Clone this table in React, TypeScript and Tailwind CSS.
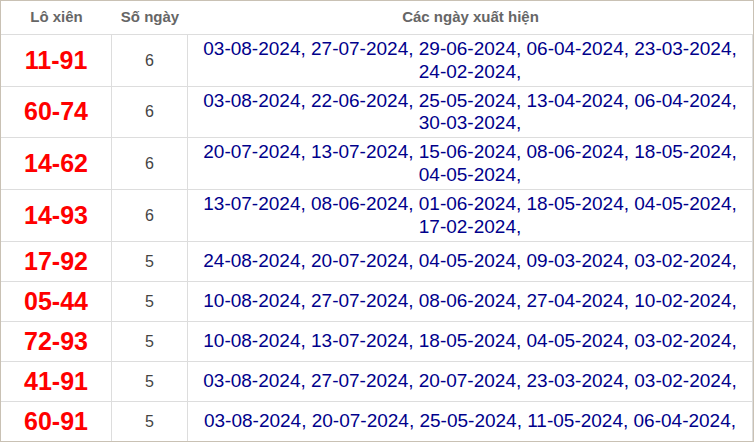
import React from 'react';

interface Row {
  pair: string;
  count: number;
  dates: string[];
  h: string;
}

const ROWS: Row[] = [
  { pair: '11-91', count: 6, h: 'h-[52px]', dates: ['03-08-2024', '27-07-2024', '29-06-2024', '06-04-2024', '23-03-2024', '24-02-2024'] },
  { pair: '60-74', count: 6, h: 'h-[51px]', dates: ['03-08-2024', '22-06-2024', '25-05-2024', '13-04-2024', '06-04-2024', '30-03-2024'] },
  { pair: '14-62', count: 6, h: 'h-[52px]', dates: ['20-07-2024', '13-07-2024', '15-06-2024', '08-06-2024', '18-05-2024', '04-05-2024'] },
  { pair: '14-93', count: 6, h: 'h-[52px]', dates: ['13-07-2024', '08-06-2024', '01-06-2024', '18-05-2024', '04-05-2024', '17-02-2024'] },
  { pair: '17-92', count: 5, h: 'h-[40px]', dates: ['24-08-2024', '20-07-2024', '04-05-2024', '09-03-2024', '03-02-2024'] },
  { pair: '05-44', count: 5, h: 'h-[40px]', dates: ['10-08-2024', '27-07-2024', '08-06-2024', '27-04-2024', '10-02-2024'] },
  { pair: '72-93', count: 5, h: 'h-[40px]', dates: ['10-08-2024', '13-07-2024', '18-05-2024', '04-05-2024', '03-02-2024'] },
  { pair: '41-91', count: 5, h: 'h-[40px]', dates: ['03-08-2024', '27-07-2024', '20-07-2024', '23-03-2024', '03-02-2024'] },
  { pair: '60-91', count: 5, h: 'h-[39px]', dates: ['03-08-2024', '20-07-2024', '25-05-2024', '11-05-2024', '06-04-2024'] },
];

export default function App() {
  return (
    <div className="w-[754px] h-[442px] bg-white border border-[#c9c1b4] font-['Liberation_Sans',Arial,sans-serif] overflow-hidden">
      {/* Header */}
      <div className="grid grid-cols-[111px_76px_1fr] h-[34px] border-b border-[#dddddd] text-[15px] font-bold text-[#666666]">
        <div className="flex items-center justify-center">Lô xiên</div>
        <div className="flex items-center justify-center">Số ngày</div>
        <div className="flex items-center justify-center">Các ngày xuất hiện</div>
      </div>

      {ROWS.map((row, i) => (
        <div
          key={row.pair}
          className={`grid grid-cols-[111px_76px_1fr] ${row.h} ${i < ROWS.length - 1 ? 'border-b border-[#dddddd]' : ''}`}
        >
          <div className="flex items-center justify-center border-r border-[#dddddd] text-[25px] font-bold text-[#ff0000]">
            {row.pair}
          </div>
          <div className="flex items-center justify-center border-r border-[#dddddd] text-[16px] text-[#444444]">
            {row.count}
          </div>
          <div className="flex items-center justify-center border-r border-[#dddddd] px-2 text-center text-[19px] leading-[22.5px] text-[#00008b]">
            <p>{row.dates.map((d) => `${d}, `).join('')}</p>
          </div>
        </div>
      ))}
    </div>
  );
}
